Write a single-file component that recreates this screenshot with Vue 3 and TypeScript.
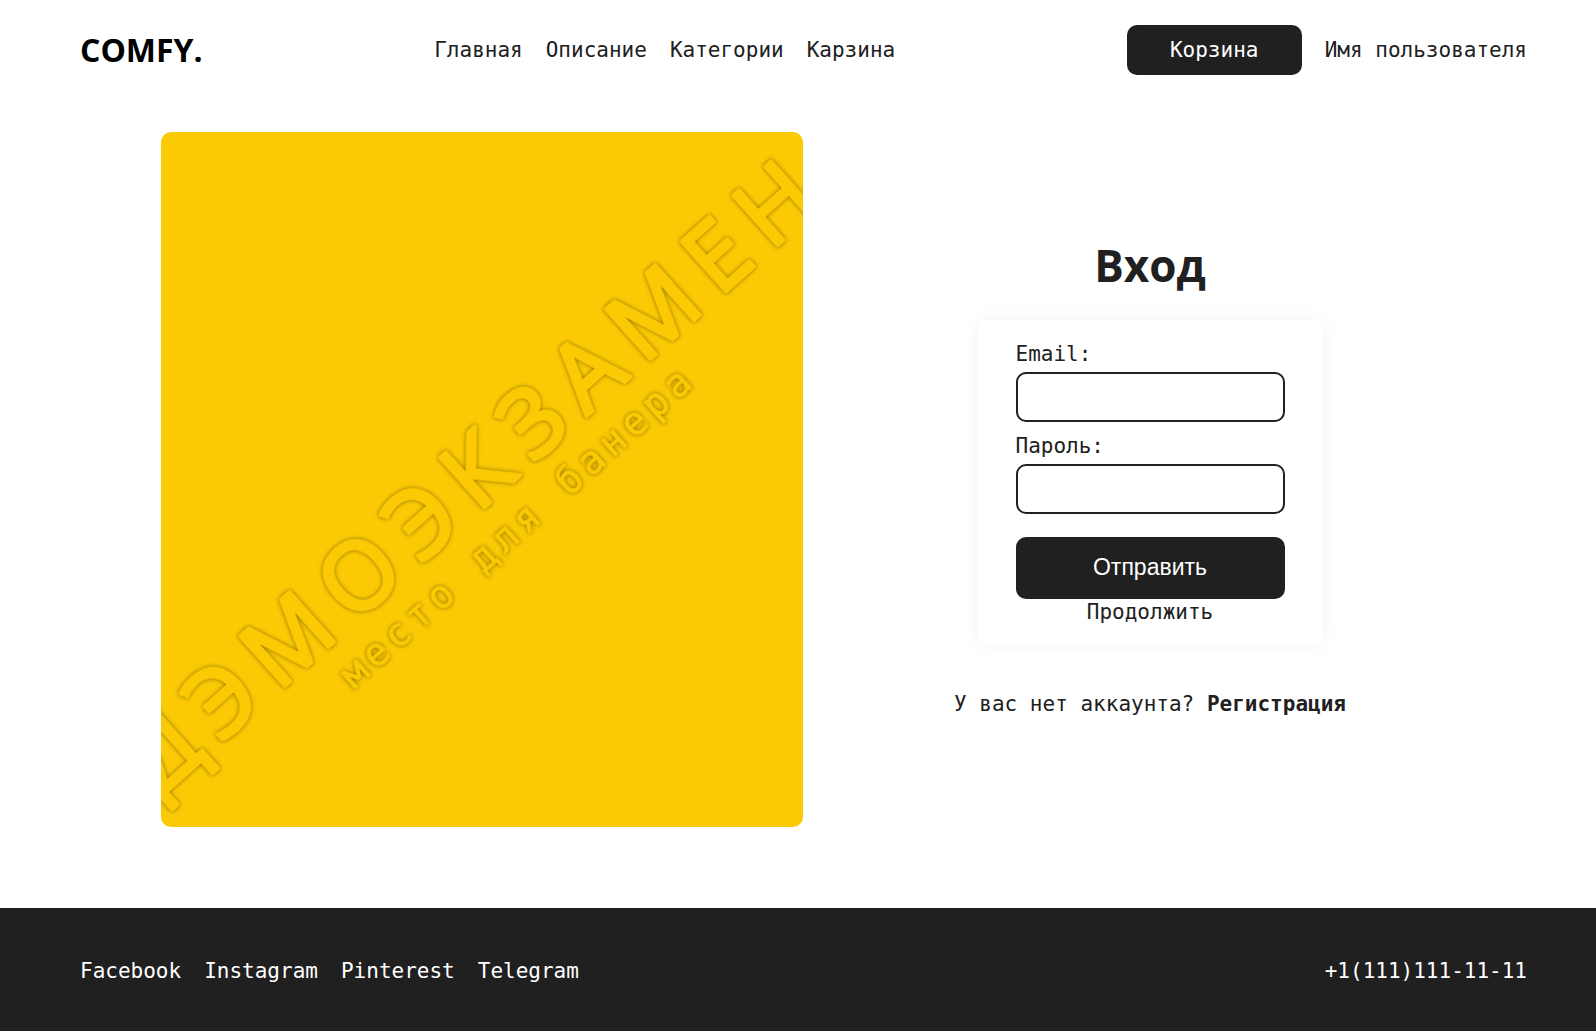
<script setup lang="ts">
import { ref } from 'vue'

interface NavLink {
  label: string
  href: string
}

const menu: NavLink[] = [
  { label: 'Главная', href: '#home' },
  { label: 'Описание', href: '#about' },
  { label: 'Категории', href: '#categories' },
  { label: 'Карзина', href: '#cart' },
]

const socials: NavLink[] = [
  { label: 'Facebook', href: '#facebook' },
  { label: 'Instagram', href: '#instagram' },
  { label: 'Pinterest', href: '#pinterest' },
  { label: 'Telegram', href: '#telegram' },
]

const email = ref('')
const password = ref('')
</script>

<template>
  <div class="page">
    <header class="header">
      <a class="logo" href="#home">COMFY.</a>
      <nav class="links">
        <a v-for="item in menu" :key="item.label" :href="item.href">{{ item.label }}</a>
      </nav>
      <div class="account">
        <button class="cart" type="button">Корзина</button>
        <a href="#profile">Имя пользователя</a>
      </div>
    </header>

    <main class="main">
      <svg class="banner" viewBox="0 0 642 695" role="img" aria-label="Баннер">
        <rect width="642" height="695" fill="#fbca04" />
        <g class="emboss" transform="translate(321 348) rotate(-41.8)">
          <text class="banner-title" x="-451" y="22">ДЭМОЭКЗАМЕН</text>
          <text class="banner-note" x="-235" y="71">место для банера</text>
        </g>
      </svg>

      <section class="login">
        <h1 class="title">Вход</h1>
        <form class="card" @submit.prevent>
          <label class="label" for="email">Email:</label>
          <input id="email" v-model="email" class="field" type="email" />
          <label class="label" for="password">Пароль:</label>
          <input id="password" v-model="password" class="field" type="password" />
          <button class="submit" type="submit">Отправить</button>
          <a class="continue" href="#continue">Продолжить</a>
        </form>
        <p class="register">У вас нет аккаунта? <a href="#register">Регистрация</a></p>
      </section>
    </main>

    <footer class="footer">
      <nav class="links">
        <a v-for="item in socials" :key="item.label" :href="item.href">{{ item.label }}</a>
      </nav>
      <a href="tel:+11111111111">+1(111)111-11-11</a>
    </footer>
  </div>
</template>

<style>
body {
  margin: 0;
  background: #fff;
}
</style>

<style scoped>
.page {
  box-sizing: border-box;
  min-height: 100vh;
  display: flex;
  flex-direction: column;
  color: #202020;
  font-family: "DejaVu Sans Mono", "Liberation Mono", monospace;
  font-size: 21px;
  line-height: 26px;
}

a {
  color: inherit;
  text-decoration: none;
  white-space: nowrap;
}

.header {
  display: flex;
  align-items: center;
  justify-content: space-between;
  padding: 25px 69px 25px 80px;
}

.logo {
  color: #000;
  font-family: "Open Sans", "Noto Sans", sans-serif;
  font-size: 32px;
  font-weight: 700;
  line-height: 50px;
}

.links {
  display: flex;
  gap: 23px;
}

.account {
  display: flex;
  align-items: center;
  gap: 23px;
}

.cart,
.submit {
  border: 0;
  border-radius: 10px;
  background: #202020;
  color: #fff;
  cursor: pointer;
}

.cart {
  width: 175px;
  height: 50px;
  padding: 0;
  font: inherit;
}

.main {
  flex: 1;
  display: grid;
  grid-template-columns: 1fr 1fr;
  align-items: center;
  gap: 26px;
  padding: 32px 125px 81px 161px;
}

.banner {
  display: block;
  width: 100%;
  border-radius: 10px;
}

.emboss {
  fill: #fbca04;
  stroke: #fbca04;
  stroke-linejoin: round;
}

.banner-title {
  font-family: "Open Sans", "Noto Sans", sans-serif;
  font-size: 94px;
  letter-spacing: 17px;
  stroke-width: 4px;
  filter: drop-shadow(0 0 2px rgba(60, 40, 0, 0.6));
}

.banner-note {
  font-family: "DejaVu Sans Mono", monospace;
  font-size: 38px;
  letter-spacing: 6px;
  stroke-width: 1px;
  filter: drop-shadow(0 0 2px rgba(60, 40, 0, 0.6));
}

.login {
  display: flex;
  flex-direction: column;
  align-items: center;
  padding-bottom: 8px;
}

.title {
  margin: 0 0 25px;
  font-family: "Open Sans", "Noto Sans", sans-serif;
  font-size: 44px;
  font-weight: 700;
  line-height: 60px;
}

.card {
  box-sizing: border-box;
  width: 345px;
  display: flex;
  flex-direction: column;
  padding: 21px 38px 20px;
  border-radius: 10px;
  background: #fff;
  box-shadow: 0 0 20px rgba(0, 0, 0, 0.05);
}

.label {
  margin-bottom: 5px;
}

.field {
  box-sizing: border-box;
  width: 100%;
  height: 50px;
  margin: 0 0 11px;
  padding: 0 12px;
  border: 2px solid #202020;
  border-radius: 10px;
  background: #fff;
  font: inherit;
  outline: none;
}

.submit {
  height: 62px;
  margin-top: 12px;
  font-family: "Liberation Sans", Arial, sans-serif;
  font-size: 23px;
}

.continue {
  align-self: center;
}

.register {
  margin: 46px 0 0;
}

.register a {
  font-weight: 700;
}

.footer {
  display: flex;
  align-items: center;
  justify-content: space-between;
  padding: 50px 69px 47px 80px;
  background: #202020;
  color: #fff;
}
</style>
